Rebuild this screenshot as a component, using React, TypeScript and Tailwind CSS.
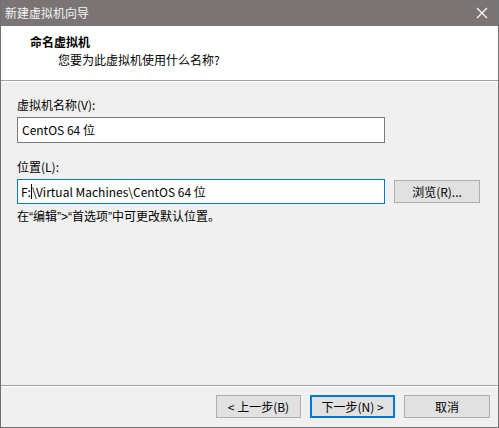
import React from 'react';

const App: React.FC = () => {
    return (
        <div className="w-[499px] h-[428px] flex flex-col bg-[#f0f0f0] border-x border-b border-[#707070] font-['Noto_Sans_CJK_SC',sans-serif] text-[12px] text-black overflow-hidden">
            {/* Title bar */}
            <div className="h-[26px] shrink-0 bg-[#7b7475] flex items-center justify-between pl-[4px] pr-[8px]">
                <span className="text-[12px] text-[#f4f4f4] leading-none">新建虚拟机向导</span>
                <svg width="12" height="12" viewBox="0 0 12 12" className="mr-[2px]">
                    <path d="M1 1 L11 11 M11 1 L1 11" stroke="#ffffff" strokeWidth="1.2" />
                </svg>
            </div>

            {/* Header */}
            <div className="h-[55px] shrink-0 bg-white border-b border-[#a0a0a0] pl-[29px] pt-[7px]">
                <div className="font-bold leading-[18px]">命名虚拟机</div>
                <div className="pl-[28px] leading-[18px]">您要为此虚拟机使用什么名称?</div>
            </div>
            <div className="h-px bg-white shrink-0" />

            {/* Body */}
            <div className="flex-1 pl-[16px] pr-[18px] pt-[15px]">
                <div className="leading-[16px]">虚拟机名称(V):</div>
                <div className="mt-[4px] w-[368px] h-[26px] bg-white border border-[#7a7a7a] flex items-center px-[4px]">
                    CentOS 64 位
                </div>

                <div className="mt-[16px] leading-[16px]">位置(L):</div>
                <div className="mt-[4px] flex items-center gap-[9px]">
                    <div className="w-[368px] h-[25px] bg-white border border-[#0078d7] flex items-center px-[3px]">
                        <span>F:</span>
                        <span className="w-px h-[15px] bg-black" />
                        <span>\Virtual Machines\CentOS 64 位</span>
                    </div>
                    <div className="w-[86px] h-[23px] bg-[#e1e1e1] border border-[#adadad] flex items-center justify-center">
                        浏览(R)...
                    </div>
                </div>
                <div className="mt-[4px] leading-[16px]">
                    在<span className="font-['Liberation_Sans',sans-serif]">“</span>编辑<span className="font-['Liberation_Sans',sans-serif]">”&gt;“</span>首选项<span className="font-['Liberation_Sans',sans-serif]">”</span>中可更改默认位置。
                </div>
            </div>

            {/* Footer */}
            <div className="h-px bg-[#a0a0a0] shrink-0" />
            <div className="h-px bg-white shrink-0" />
            <div className="h-[40px] shrink-0 flex items-start justify-end gap-[9px] pt-[8px] pr-[8px]">
                <div className="w-[85px] h-[23px] bg-[#e1e1e1] border border-[#adadad] flex items-center justify-center">
                    &lt; 上一步(B)
                </div>
                <div className="w-[85px] h-[23px] bg-[#e1e1e1] border-2 border-[#0078d7] flex items-center justify-center">
                    下一步(N) &gt;
                </div>
                <div className="w-[86px] h-[23px] bg-[#e1e1e1] border border-[#adadad] flex items-center justify-center">
                    取消
                </div>
            </div>
        </div>
    );
};

export default App;
